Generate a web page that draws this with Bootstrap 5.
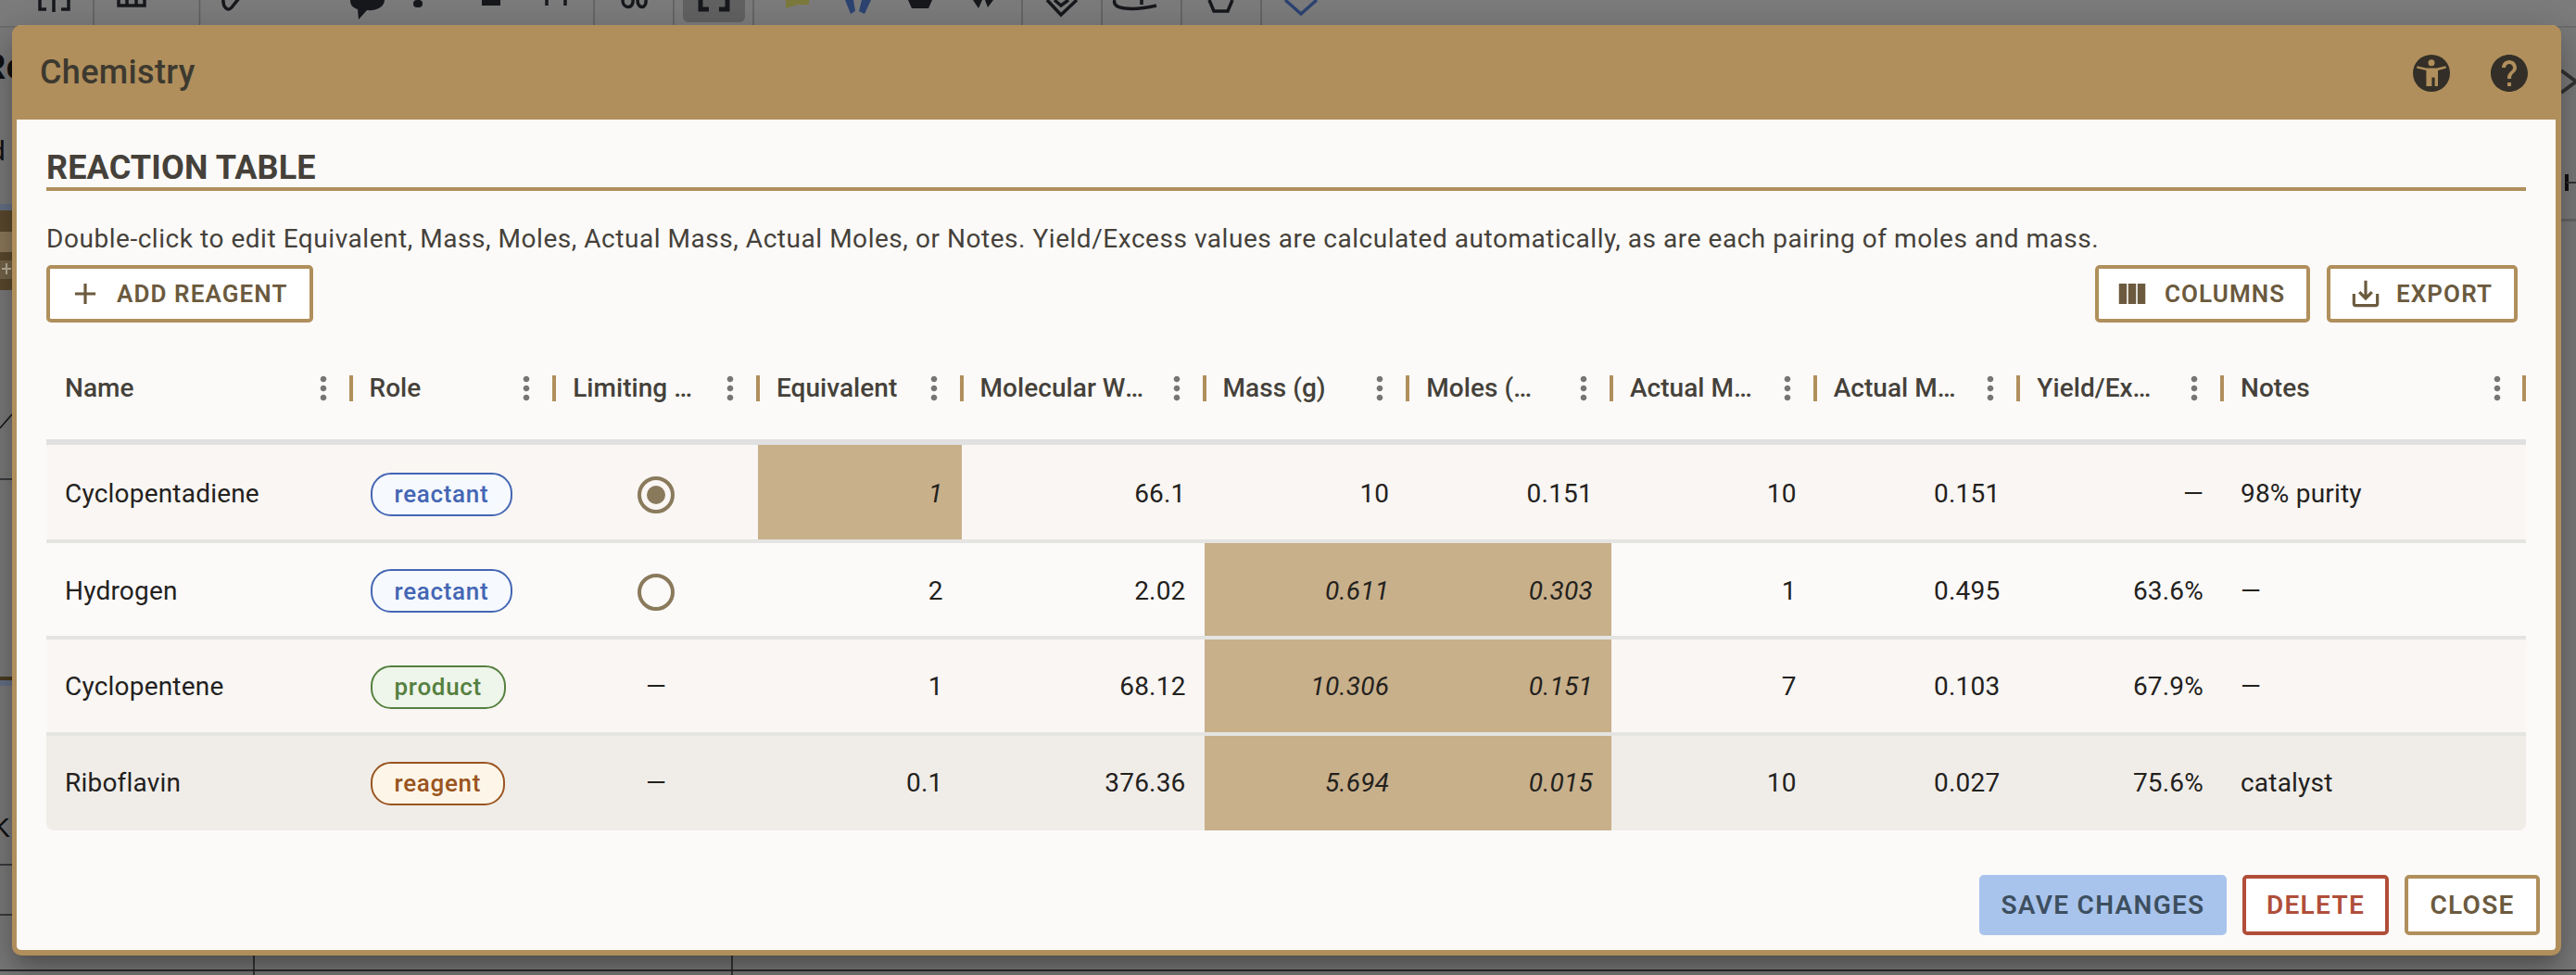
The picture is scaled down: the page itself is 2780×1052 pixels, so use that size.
<!DOCTYPE html>
<html lang="en">
<head>
<meta charset="utf-8">
<title>Chemistry</title>
<link href="https://cdn.jsdelivr.net/npm/bootstrap@5.3.0/dist/css/bootstrap.min.css" rel="stylesheet">
<style>
html,body{height:100%;margin:0}
body{background:#7a7a7a;overflow:hidden;font-family:Roboto,"Liberation Sans",sans-serif;color:#23211d}
.bg-canvas{position:absolute;inset:0;width:2780px;height:1052px}
.bg-glyph{position:absolute;font-family:"Liberation Sans",sans-serif;color:#111;line-height:1}
.glyph-re{font-size:38px;left:-21px;top:53px;font-weight:700}
.glyph-d{font-size:30px;left:-11px;top:148px}
.glyph-k{font-size:30px;left:-9px;top:878px}
.chem-dialog{position:absolute;left:13px;top:27px;width:2751px;height:1004px;background:#fbfaf8;border:solid #b08f5c;border-width:0 6px 6px 5px;border-radius:10px;box-shadow:0 11px 15px -7px rgba(0,0,0,.2),0 24px 38px 3px rgba(0,0,0,.14),0 9px 46px 8px rgba(0,0,0,.12)}
.chem-head{height:102px;margin:0 -6px 0 -5px;background:#b08f5c;border-radius:10px 10px 0 0;padding:2px 32px 0 30px;border:0}
.chem-title{font-size:36px;font-weight:500;letter-spacing:.35px;color:#3d392f;margin:0}
.head-ic{width:48px;height:48px;color:#332f28}
.head-gap{gap:36px}
.chem-body{padding:31px 32px 0;flex:1 1 auto}
.sect-title{font-size:36px;font-weight:700;letter-spacing:.15px;line-height:42px;height:46px;color:#45413a;border-bottom:4px solid #b08f5c;margin:0 0 32px}
.sect-note{font-size:28px;line-height:40px;letter-spacing:.54px;color:#45413a;margin:0 0 8px}
.tool-row{height:62px;padding-right:9px}
.tool-gap{gap:18px}
.tool-btn{height:62px;padding:0;border:4px solid #b08f5c;border-radius:5px;color:#6b5a3e;background:#fff;font-size:26px;font-weight:600;letter-spacing:1.1px;text-transform:uppercase;display:flex;align-items:center;justify-content:flex-start}
.tool-btn:hover{background:#fff;color:#6b5a3e;border-color:#b08f5c}
.btn-add{width:288px;gap:15px;padding-left:19px}
.btn-cols{width:232px;gap:16px;padding-left:17px}
.btn-export{width:206px;gap:14px;padding-left:19px}
.tool-ic{width:38px;height:38px;flex:none}
.chem-grid{table-layout:fixed;width:2676px;margin:0;border-collapse:separate;border-spacing:0;--bs-table-bg:transparent;font-size:28px}
.chem-grid>:not(caption)>*>*{border-bottom:0;box-shadow:none;padding:0 20px;vertical-align:middle}
.chem-grid th{height:132px;border-bottom:6px solid #e0e0e0!important;font-weight:500;color:#45413a;letter-spacing:.05px;padding:15px 0 0!important}
.th-box{display:flex;align-items:center;height:28px;border-left:4px solid #b08f5c;padding-left:18px;margin-left:-2px}
th:first-child .th-box{border-left:0;padding-left:20px;margin-left:0}
th:last-child .th-box{border-right:4px solid #b08f5c}
th:last-child .th-dots{margin-right:7px}
.th-text{flex:0 1 auto;min-width:0;white-space:nowrap;overflow:hidden;text-overflow:ellipsis}
.th-slot{flex:1 1 auto;min-width:0;display:flex;margin-right:14px}
.th-dots{width:40px;height:40px;flex:none;color:#757575;margin-right:10px}
.chem-grid td{color:#23211d;border-bottom:4px solid #e4e4e2!important;letter-spacing:.2px;white-space:nowrap}
.row-a td{background:#f9f6f3}
.row-b td{background:#fbfaf8}
.row-c td{background:#f0ede8;border-bottom:0!important}
.row-1 td{height:106px;padding-top:4px!important}
.row-2 td{height:104px;padding-top:3px!important}
.row-3 td{height:104px;padding-top:2px!important}
.row-c td{height:102px}
.row-c td:first-child{border-bottom-left-radius:8px}
.row-c td:last-child{border-bottom-right-radius:8px}
.chem-grid td:nth-child(2){padding-left:21px}
.chem-grid td.num-cell{text-align:right}
.chem-grid td.mid-cell{text-align:center}
.chem-grid td.calc-cell{background:#c8b08b;font-style:italic}
.role-tag{display:inline-flex;align-items:center;height:47px;padding:0 24px;border:2px solid;border-radius:22px;font-size:26px;font-weight:500;letter-spacing:.7px;line-height:1;vertical-align:middle}
.tag-blue{color:#4466b4;border-color:#4466b4;background:#f6f9fe}
.tag-green{color:#55803f;border-color:#55803f;background:#eef5ea}
.tag-amber{color:#9a5420;border-color:#9a5420;background:#fdf6e8}
.radio-mark{display:inline-flex;align-items:center;justify-content:center;width:40px;height:40px;border:4px solid #8a7a5c;border-radius:50%;vertical-align:middle}
.radio-mark i{display:block;width:20px;height:20px;border-radius:50%;background:#8a7a5c}
.chem-foot{padding:0 17px 16px 0;border:0;gap:17px}
.foot-btn{height:65px;padding:0;font-size:28px;font-weight:600;letter-spacing:1.3px;border-radius:5px;text-transform:uppercase;display:flex;align-items:center;justify-content:center;border:4px solid}
.foot-save{width:267px;background:#a9c4ec;border-color:#a9c4ec;color:#3d4f60}
.foot-del{width:158px;background:#fff;border-color:#b04e3a;color:#b04e3a}
.foot-close{width:146px;background:#fff;border-color:#b08f5c;color:#6b5a3e}
.c-a{width:328.5px}.c-b{width:219.7px}.c-c{width:262px}.c-z{width:327.900px}
</style>
</head>
<body>
<svg width="0" height="0" class="position-absolute">
  <symbol id="i-dots" viewBox="0 0 24 24"><path fill="currentColor" d="M12 8c1.1 0 2-.9 2-2s-.9-2-2-2-2 .9-2 2 .9 2 2 2zm0 2c-1.1 0-2 .9-2 2s.9 2 2 2 2-.9 2-2-.9-2-2-2zm0 6c-1.1 0-2 .9-2 2s.9 2 2 2 2-.9 2-2-.9-2-2-2z"/></symbol>
</svg>

<!-- dimmed page behind the dialog -->
<svg class="bg-canvas" viewBox="0 0 2780 1052" aria-hidden="true">
  <rect x="0" y="0" width="2780" height="28" fill="#7c7c7c"/>
  <rect x="0" y="28" width="2780" height="2" fill="#6e6e6e"/>
  <g stroke="#5f5f5f" stroke-width="1.5">
    <path d="M101 0V27M215.5 0V27M641 0V27M727 0V27M813 0V27M1103 0V27M1189 0V27M1275 0V27M1361 0V27"/>
  </g>
  <rect x="737" y="-8" width="67" height="32" rx="6" fill="#626262"/>
  <g fill="none" stroke="#16181c" stroke-width="3.5">
    <path d="M43 0V10H50M58 0V13M66 10H74V0"/>
    <path d="M128 -2V6H156V-2M137 0V6M147 0V6"/>
    <path d="M241 -2C240 8 246 13 250 8L258 -2"/>
    <path d="M672 0C672 10 684 10 683 0M688 0C688 10 698 10 697 0"/>
    <path d="M756 0V10H765M776 10H785V0" stroke-width="5"/>
    <path d="M1130 0L1145 16L1162 0M1138 0L1145 6L1153 0"/>
    <path d="M1203 0C1199 10 1222 12 1248 6M1232 0V5"/>
    <path d="M1305 0L1310 12H1325L1330 0"/>
    <path d="M590 0V6M610 0V6"/>
  </g>
  <g fill="#16181c">
    <path d="M378 0H415C415 8 405 12 396 11L387 21L386 10C380 8 378 5 378 0Z"/>
    <rect x="446" y="0" width="10" height="8" rx="4"/>
    <rect x="520" y="0" width="20" height="6"/>
    <path d="M980 0H1006L1002 9H984Z"/>
    <path d="M1050 0H1072L1066 8L1063 0H1060L1056 9Z"/>
  </g>
  <path d="M848 0H873V5H860L848 9Z" fill="#7d7a3c"/>
  <path d="M912 0L918 15L923 12L921 0ZM930 0L927 12L933 15L940 0Z" fill="#2d4472"/>
  <path d="M1387 0L1404 15L1421 0" fill="none" stroke="#2d4472" stroke-width="3.5"/>

  <!-- left strip -->
  <rect x="0" y="220" width="13" height="7" fill="#667085"/>
  <rect x="0" y="227" width="13" height="86" fill="#5a4a2e"/>
  <rect x="0" y="250" width="13" height="22" fill="#8d7a5c"/>
  <rect x="0" y="281" width="13" height="20" fill="#75644a"/>
  <path d="M2 290H12M7 284V296" stroke="#bdb39f" stroke-width="2"/>
  <rect x="0" y="730" width="13" height="4" fill="#4a3c22"/>
  <rect x="0" y="734" width="13" height="6" fill="#667085"/>
  <path d="M0 462L13 447" stroke="#16181c" stroke-width="1.5"/>
  <path d="M0 517H13M0 933H13M0 987H13" stroke="#26282c" stroke-width="1.5"/>
  <path d="M0 1047H2780" stroke="#2e2e2e" stroke-width="2"/>
  <path d="M274 1031V1052M790 1031V1052" stroke="#222" stroke-width="1.5"/>
  <!-- right strip -->
  <path d="M2764 76L2780 88M2764 100L2780 88" stroke="#333" stroke-width="4" fill="none"/>
  <path d="M2770 188V206" stroke="#111" stroke-width="4"/>
  <path d="M2770 197H2780" stroke="#333" stroke-width="2"/>
  <rect x="2764" y="236" width="16" height="3" fill="#666"/>
</svg>
<span class="bg-glyph glyph-re">Re</span>
<span class="bg-glyph glyph-d">d</span>
<span class="bg-glyph glyph-k">K</span>

<div class="modal-content chem-dialog d-flex flex-column">
  <header class="modal-header chem-head d-flex align-items-center justify-content-between">
    <h1 class="chem-title">Chemistry</h1>
    <div class="d-flex align-items-center head-gap">
      <svg class="head-ic" viewBox="0 0 24 24" aria-label="Accessibility"><circle cx="12" cy="12" r="10" fill="currentColor"/><circle cx="12" cy="6.4" r="1.75" fill="#b08f5c"/><path fill="#b08f5c" d="M4.3 8.1l4.8 1.2h5.800l4.800-1.200.3 1.200-4.500 1.200V19h-1.700v-4.700h-1.600V19H9.200V10.500L4 9.300z"/></svg>
      <svg class="head-ic" viewBox="0 0 24 24" aria-label="Help"><path fill="currentColor" d="M12 2C6.48 2 2 6.48 2 12s4.48 10 10 10 10-4.48 10-10S17.52 2 12 2zm1 17h-2v-2h2v2zm2.070-7.750l-.9.920C13.450 12.900 13 13.500 13 15h-2v-.5c0-1.100.45-2.100 1.170-2.830l1.240-1.260c.37-.36.59-.86.59-1.410 0-1.100-.9-2-2-2s-2 .9-2 2H8c0-2.210 1.790-4 4-4s4 1.790 4 4c0 .88-.36 1.680-.93 2.250z"/></svg>
    </div>
  </header>

  <div class="modal-body chem-body">
    <h2 class="sect-title text-uppercase">Reaction Table</h2>
    <p class="sect-note">Double-click to edit Equivalent, Mass, Moles, Actual Mass, Actual Moles, or Notes. Yield/Excess values are calculated automatically, as are each pairing of moles and mass.</p>
    <div class="d-flex justify-content-between tool-row">
      <button type="button" class="btn tool-btn btn-add"><svg class="tool-ic" viewBox="0 0 24 24"><path fill="currentColor" d="M19 13h-6v6h-2v-6H5v-2h6V5h2v6h6v2z"/></svg>Add Reagent</button>
      <div class="d-flex tool-gap">
        <button type="button" class="btn tool-btn btn-cols"><svg class="tool-ic" viewBox="0 0 24 24"><path fill="currentColor" d="M14.670 5v14H9.330V5zm1 14H21V5h-5.330zm-7.340 0V5H3v14z"/></svg>Columns</button>
        <button type="button" class="btn tool-btn btn-export"><svg class="tool-ic" viewBox="0 0 24 24"><path fill="currentColor" d="M19 12v7H5v-7H3v7c0 1.100.9 2 2 2h14c1.100 0 2-.9 2-2v-7h-2zm-6 .67l2.590-2.580L17 11.500l-5 5-5-5 1.410-1.410L11 12.670V3h2z"/></svg>Export</button>
      </div>
    </div>

    <table class="table chem-grid">
      <colgroup>
        <col class="c-a"><col class="c-b"><col class="c-b"><col class="c-b"><col class="c-c"><col class="c-b"><col class="c-b"><col class="c-b"><col class="c-b"><col class="c-b"><col class="c-z">
      </colgroup>
      <thead>
        <tr>
          <th><div class="th-box"><span class="th-slot"><span class="th-text">Name</span></span><svg class="th-dots"><use href="#i-dots"/></svg></div></th>
          <th><div class="th-box"><span class="th-slot"><span class="th-text">Role</span></span><svg class="th-dots"><use href="#i-dots"/></svg></div></th>
          <th><div class="th-box"><span class="th-slot"><span class="th-text">Limiting Reagent</span></span><svg class="th-dots"><use href="#i-dots"/></svg></div></th>
          <th><div class="th-box"><span class="th-slot"><span class="th-text">Equivalent</span></span><svg class="th-dots"><use href="#i-dots"/></svg></div></th>
          <th><div class="th-box"><span class="th-slot"><span class="th-text">Molecular Weight</span></span><svg class="th-dots"><use href="#i-dots"/></svg></div></th>
          <th><div class="th-box"><span class="th-slot"><span class="th-text">Mass (g)</span></span><svg class="th-dots"><use href="#i-dots"/></svg></div></th>
          <th><div class="th-box"><span class="th-slot"><span class="th-text">Moles (mol)</span></span><svg class="th-dots"><use href="#i-dots"/></svg></div></th>
          <th><div class="th-box"><span class="th-slot"><span class="th-text">Actual Mass</span></span><svg class="th-dots"><use href="#i-dots"/></svg></div></th>
          <th><div class="th-box"><span class="th-slot"><span class="th-text">Actual Moles</span></span><svg class="th-dots"><use href="#i-dots"/></svg></div></th>
          <th><div class="th-box"><span class="th-slot"><span class="th-text">Yield/Excess</span></span><svg class="th-dots"><use href="#i-dots"/></svg></div></th>
          <th><div class="th-box"><span class="th-slot"><span class="th-text">Notes</span></span><svg class="th-dots"><use href="#i-dots"/></svg></div></th>
        </tr>
      </thead>
      <tbody>
        <tr class="row-a row-1">
          <td>Cyclopentadiene</td><td><span class="role-tag tag-blue">reactant</span></td>
          <td class="mid-cell"><span class="radio-mark"><i></i></span></td>
          <td class="num-cell calc-cell">1</td><td class="num-cell">66.1</td><td class="num-cell">10</td><td class="num-cell">0.151</td><td class="num-cell">10</td><td class="num-cell">0.151</td><td class="num-cell">—</td><td>98% purity</td>
        </tr>
        <tr class="row-b row-2">
          <td>Hydrogen</td><td><span class="role-tag tag-blue">reactant</span></td>
          <td class="mid-cell"><span class="radio-mark"></span></td>
          <td class="num-cell">2</td><td class="num-cell">2.02</td><td class="num-cell calc-cell">0.611</td><td class="num-cell calc-cell">0.303</td><td class="num-cell">1</td><td class="num-cell">0.495</td><td class="num-cell">63.6%</td><td>—</td>
        </tr>
        <tr class="row-a row-3">
          <td>Cyclopentene</td><td><span class="role-tag tag-green">product</span></td>
          <td class="mid-cell">—</td>
          <td class="num-cell">1</td><td class="num-cell">68.12</td><td class="num-cell calc-cell">10.306</td><td class="num-cell calc-cell">0.151</td><td class="num-cell">7</td><td class="num-cell">0.103</td><td class="num-cell">67.9%</td><td>—</td>
        </tr>
        <tr class="row-c">
          <td>Riboflavin</td><td><span class="role-tag tag-amber">reagent</span></td>
          <td class="mid-cell">—</td>
          <td class="num-cell">0.1</td><td class="num-cell">376.36</td><td class="num-cell calc-cell">5.694</td><td class="num-cell calc-cell">0.015</td><td class="num-cell">10</td><td class="num-cell">0.027</td><td class="num-cell">75.6%</td><td>catalyst</td>
        </tr>
      </tbody>
    </table>
  </div>

  <footer class="modal-footer chem-foot d-flex justify-content-end">
    <button type="button" class="btn foot-btn foot-save m-0">Save Changes</button>
    <button type="button" class="btn foot-btn foot-del m-0">Delete</button>
    <button type="button" class="btn foot-btn foot-close m-0">Close</button>
  </footer>
</div>
</body>
</html>
